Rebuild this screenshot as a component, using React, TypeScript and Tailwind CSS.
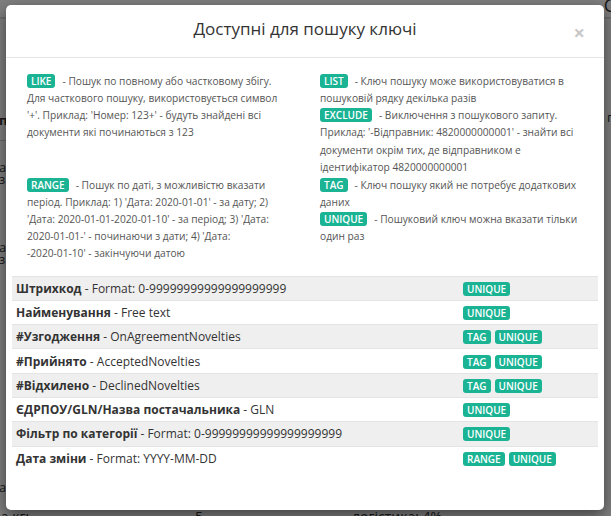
import React from "react";

function Badge({ children }: { children: React.ReactNode }) {
  return (
    <span className="inline-block bg-[#1ab394] text-white text-[10px] font-semibold leading-[10px] px-[4px] py-[2px] rounded-[3px] align-baseline">
      {children}
    </span>
  );
}

function Desc({ tag, children }: { tag: string; children: React.ReactNode }) {
  return (
    <div>
      <span className="mr-[7px]">
        <Badge>{tag}</Badge>
      </span>
      {children}
    </div>
  );
}

const NINES = "0-" + "9".repeat(20);

const rows: { b: string; t: string; tags: string[] }[] = [
  { b: "Штрихкод", t: "Format: " + NINES, tags: ["UNIQUE"] },
  { b: "Найменування", t: "Free text", tags: ["UNIQUE"] },
  { b: "#Узгодження", t: "OnAgreementNovelties", tags: ["TAG", "UNIQUE"] },
  { b: "#Прийнято", t: "AcceptedNovelties", tags: ["TAG", "UNIQUE"] },
  { b: "#Відхилено", t: "DeclinedNovelties", tags: ["TAG", "UNIQUE"] },
  { b: "ЄДРПОУ/GLN/Назва постачальника", t: "GLN", tags: ["UNIQUE"] },
  { b: "Фільтр по категорії", t: "Format: " + NINES, tags: ["UNIQUE"] },
  { b: "Дата зміни", t: "Format: YYYY-MM-DD", tags: ["RANGE", "UNIQUE"] },
];

export default function App() {
  return (
    <div className="relative w-[611px] h-[516px] overflow-hidden bg-white font-['Open_Sans',sans-serif]">
      {/* underlying page, dimmed by the backdrop */}
      <div className="absolute inset-0 flex flex-col text-[#333] text-[13px]">
        <div className="h-[17px] flex justify-end">
          <span className="text-[18px] leading-[10px] mr-[-4px]">C</span>
        </div>
        <div className="h-[2px] bg-[#dcdcdc]" />
        <div className="flex justify-between pt-[95px]">
          <div className="flex flex-col leading-[12px] ml-[-1px]">
            <span className="font-bold">п</span>
            <div className="h-[1px] w-[8px] bg-[#d0d0d0] mt-[14px]" />
            <span className="mt-[20px]">а</span>
            <span>з</span>
            <span className="mt-[56px]">а</span>
            <span>з</span>
            <span className="mt-[216px]">а</span>
          </div>
          <span className="mr-[-5px] mt-[-3px] leading-[12px]">г,</span>
        </div>
        <div className="flex mt-auto h-[7px] leading-[16px] text-[14px]">
          <span className="ml-[-6px] w-[201px]">за кг:</span>
          <span className="w-[157px]">5</span>
          <span>логістика: 4%</span>
        </div>
      </div>
      <div className="absolute inset-0 bg-black/50" />

      {/* modal */}
      <div className="absolute left-[6px] top-[5px] w-[598px] h-[505px] bg-white rounded-[5px] shadow-[0_5px_15px_rgba(0,0,0,0.5)]">
        <div className="relative h-[53px] border-b border-[#e5e5e5] flex items-center justify-center pb-[4px]">
          <h4 className="text-[17px] leading-[20px] font-medium text-[#333]">Доступні для пошуку ключі</h4>
          <button className="absolute right-[19px] top-[18px] text-[20px] leading-none font-bold text-[#c8c8c8]">×</button>
        </div>
        <div className="px-[6px] pt-[15px]">
          <div className="grid grid-cols-2 text-[10.2px] leading-[17.14px] text-[#555]">
            <div className="px-[15px]">
              <Desc tag="LIKE">
                - Пошук по повному або частковому збігу. Для часткового пошуку, використовується символ '+'. Приклад: 'Номер: 123+' - будуть знайдені всі документи які починаються з 123
              </Desc>
            </div>
            <div className="px-[15px]">
              <Desc tag="LIST">- Ключ пошуку може використовуватися в пошуковій рядку декілька разів</Desc>
              <Desc tag="EXCLUDE">
                - Виключення з пошукового запиту. Приклад: '-Відправник: 4820000000001' - знайти всі документи окрім тих, де відправником е ідентифікатор 4820000000001
              </Desc>
            </div>
            <div className="px-[15px] pt-[1px]">
              <Desc tag="RANGE">
                - Пошук по даті, з можливістю вказати період. Приклад: 1) 'Дата: 2020-01-01' - за дату; 2) 'Дата: 2020-01-01-2020-01-10' - за період; 3) 'Дата: 2020-01-01-' - починаючи з дати; 4) 'Дата:{" "}
                <span className="whitespace-nowrap">-2020-01-10'</span> - закінчуючи датою
              </Desc>
            </div>
            <div className="px-[15px] pt-[1px]">
              <Desc tag="TAG">- Ключ пошуку який не потребує додаткових даних</Desc>
              <Desc tag="UNIQUE">- Пошуковий ключ можна вказати тільки один раз</Desc>
            </div>
          </div>

          <div className="mt-[13px] text-[12px] text-[#333]">
            {rows.map((r, i) => (
              <div
                key={i}
                className={
                  "grid grid-cols-[447px_1fr] items-center h-[24.3px] border-t border-[#e4e4e4] " +
                  (i % 2 === 0 ? "bg-[#efefef]" : "bg-white")
                }
              >
                <div className="px-[4px] leading-[17px] whitespace-nowrap">
                  <span className="font-bold">{r.b}</span> - {r.t}
                </div>
                <div className="px-[4px] flex gap-[4px] pt-[1px]">
                  {r.tags.map((t) => (
                    <Badge key={t}>{t}</Badge>
                  ))}
                </div>
              </div>
            ))}
          </div>
        </div>
      </div>
    </div>
  );
}
